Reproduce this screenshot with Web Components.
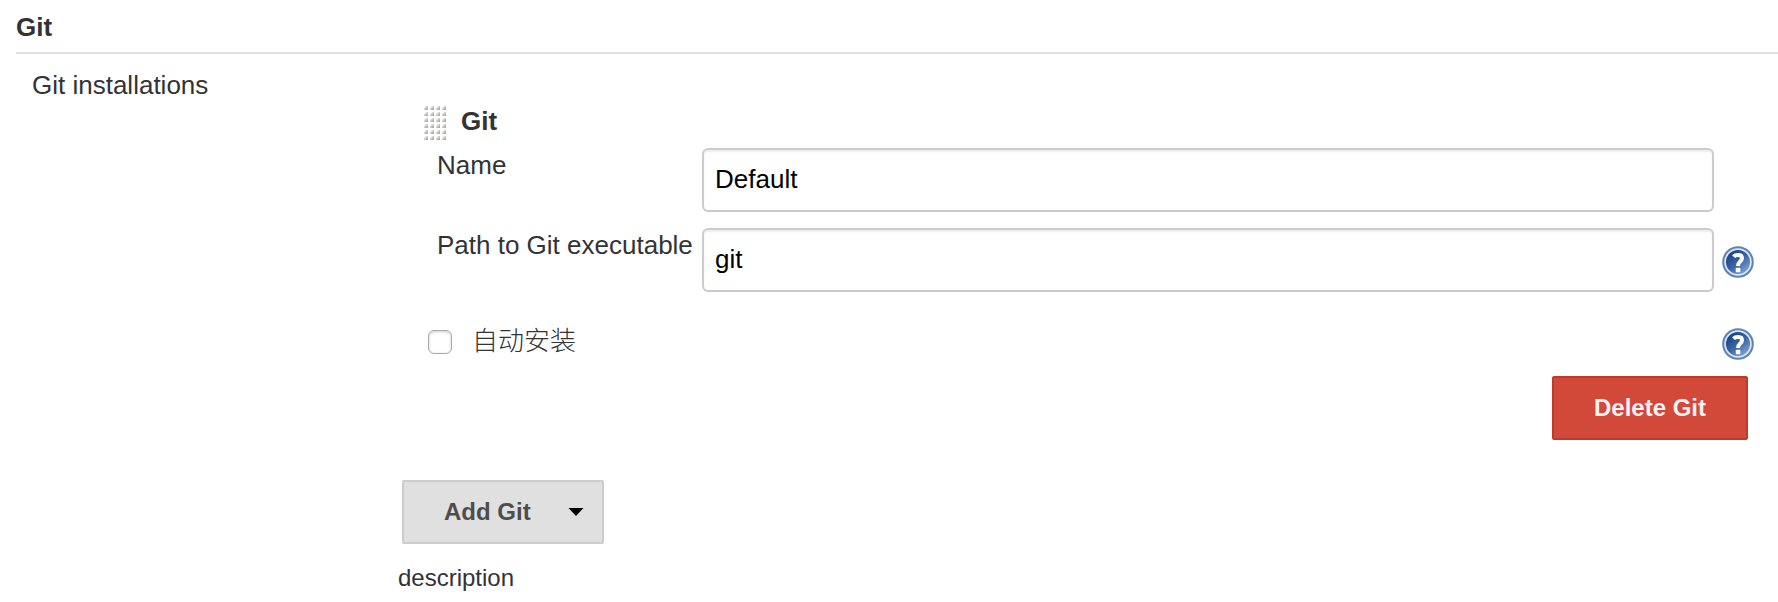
<!DOCTYPE html>
<html lang="en">
<head>
<meta charset="utf-8">
<title>Git</title>
<style>
  body { margin: 0; background: #fff; color: #333; font: 26px/30px "Liberation Sans", "Noto Sans CJK SC", Arial, sans-serif; }
</style>
</head>
<body>
<config-section heading="Git" label="Git installations">
  <tool-installer heading="Git">
    <text-field label="Name" value="Default"></text-field>
    <text-field label="Path to Git executable" value="git" help></text-field>
    <check-field label="自动安装"></check-field>
    <action-button slot="actions" kind="danger">Delete Git</action-button>
  </tool-installer>
  <action-button slot="footer" kind="menu">Add Git</action-button>
  <span slot="description">description</span>
</config-section>
<script>
const define = (name, html, setup) => {
  const template = document.createElement('template');
  template.innerHTML = '<style>*{box-sizing:border-box}</style>' + html;
  customElements.define(name, class extends HTMLElement {
    connectedCallback() {
      if (this.shadowRoot) return;
      this.attachShadow({ mode: 'open' }).append(template.content.cloneNode(true));
      if (setup) setup(this, this.shadowRoot);
    }
  });
};

define('help-icon', `
  <style>
    :host { display: block; width: 32px; height: 32px; }
    button { display: block; width: 32px; height: 32px; padding: 0; border: 0; background: none; cursor: pointer; }
    svg { display: block; }
  </style>
  <button type="button" aria-label="Help">
    <svg width="32" height="32" viewBox="0 0 32 32">
      <defs><linearGradient id="g" x1="0.1" y1="0" x2="0.9" y2="1">
        <stop offset="0.15" stop-color="#1d4484"/><stop offset="0.5" stop-color="#3a63a2"/><stop offset="0.9" stop-color="#7fa3d6"/>
      </linearGradient></defs>
      <circle cx="16" cy="16" r="15.8" fill="#5d83ba"/>
      <circle cx="16" cy="16" r="12.9" fill="url(#g)" stroke="#dce6f2" stroke-width="1.7"/>
      <path d="M11.5 10.6C13.2 8.8 20 7.6 20 12.2C20 15.4 16 15.6 16 20" fill="none" stroke="#fff" stroke-width="4"/>
      <rect x="13.8" y="21.8" width="4.6" height="4.4" rx="0.8" fill="#fff"/>
    </svg>
  </button>`);

define('drag-handle', `
  <style>
    :host { display: block; width: 23px; height: 36px; cursor: move; }
    svg { display: block; }
  </style>
  <svg width="23" height="36" aria-hidden="true">
    <defs>
      <linearGradient id="d" x1="0" y1="0" x2="1" y2="1"><stop offset="0.2" stop-color="#f0f0ee"/><stop offset="0.55" stop-color="#c6c6c2"/><stop offset="1" stop-color="#9c9c96"/></linearGradient>
      <pattern id="p" width="6" height="6" patternUnits="userSpaceOnUse">
        <path d="M0 4L0 2L2 0L4 0L4 4Z" fill="url(#d)"/>
      </pattern>
    </defs>
    <rect width="23" height="36" fill="url(#p)"/>
  </svg>`);

define('text-field', `
  <style>
    :host { display: grid; grid-template-columns: 265px minmax(0, 1fr) 64px; align-items: start; height: 80px; }
    label { padding-top: 2px; white-space: nowrap; }
    input { width: 100%; height: 64px; margin: 0; padding: 0 11px 2px; border: 2px solid #ccc; border-radius: 6px;
      background: #fff; color: #000; font: inherit; outline: 0; box-shadow: inset 0 2px 2px #eee; }
    help-icon { margin: 18px 0 0 8px; }
  </style>
  <label for="field"></label><input id="field" type="text">`, (el, root) => {
  root.querySelector('label').textContent = el.getAttribute('label');
  root.querySelector('input').value = el.getAttribute('value');
  if (el.hasAttribute('help')) root.append(document.createElement('help-icon'));
});

define('check-field', `
  <style>
    :host { display: flex; align-items: flex-start; height: 32px; margin: 20px 24px 0 -9px; }
    input { appearance: none; width: 24px; height: 24px; margin: 2px 20px 0 0; border: 1px solid #aaa; border-radius: 6px;
      background: #fff; box-shadow: inset 0 1px 3px #ccc; }
    input:checked { background: #3e67a5; }
    label { flex: 1; line-height: 26px; font-weight: 300; }
  </style>
  <input id="check" type="checkbox"><label for="check"></label><help-icon></help-icon>`, (el, root) => {
  root.querySelector('label').textContent = el.getAttribute('label');
});

define('action-button', `
  <style>
    :host { display: inline-block; }
    button { display: flex; align-items: center; height: 64px; margin: 0; padding: 0 40px; border: 2px solid #bf3a2b;
      border-radius: 2px; background: #d24939; color: #f2f2f2; font: bold 24px/28px "Liberation Sans", Arial, sans-serif; cursor: pointer; }
    svg { display: none; }
    :host([kind="menu"]) button { padding: 0 18px 0 40px; gap: 37px; border-color: #ccc; background: #e0e0e0; color: #4d4d4d; }
    :host([kind="menu"]) svg { display: block; }
  </style>
  <button type="button"><slot></slot><svg width="16" height="8" aria-hidden="true"><path d="M0.5 0H15.5L8 8Z" fill="#000"/></svg></button>`);

define('tool-installer', `
  <style>
    :host { display: block; padding: 36px 0 0 22px; }
    header { display: flex; gap: 14px; height: 42px; }
    h3 { margin: 0; font-size: 26px; line-height: 30px; }
    .fields { padding-left: 13px; }
    .actions { display: flex; justify-content: flex-end; padding: 16px 30px 0 0; }
  </style>
  <header><drag-handle></drag-handle><h3></h3></header>
  <div class="fields"><slot></slot></div>
  <div class="actions"><slot name="actions"></slot></div>`, (el, root) => {
  root.querySelector('h3').textContent = el.getAttribute('heading');
});

define('config-section', `
  <style>
    :host { display: block; padding-left: 16px; }
    h2 { margin: 0; padding: 12px 0 10px; border-bottom: 2px solid #e0e0e0; font-size: 26px; line-height: 30px; }
    .row { display: grid; grid-template-columns: 386px minmax(0, 1fr); padding-top: 16px; }
    .label { padding-left: 16px; }
    .footer { padding-top: 40px; }
    .description { margin: 18px 0 0 -4px; font-size: 24px; line-height: 32px; }
  </style>
  <h2></h2>
  <div class="row">
    <div class="label"></div>
    <div>
      <slot></slot>
      <div class="footer"><slot name="footer"></slot></div>
      <div class="description"><slot name="description"></slot></div>
    </div>
  </div>`, (el, root) => {
  root.querySelector('h2').textContent = el.getAttribute('heading');
  root.querySelector('.label').textContent = el.getAttribute('label');
});
</script>
</body>
</html>
